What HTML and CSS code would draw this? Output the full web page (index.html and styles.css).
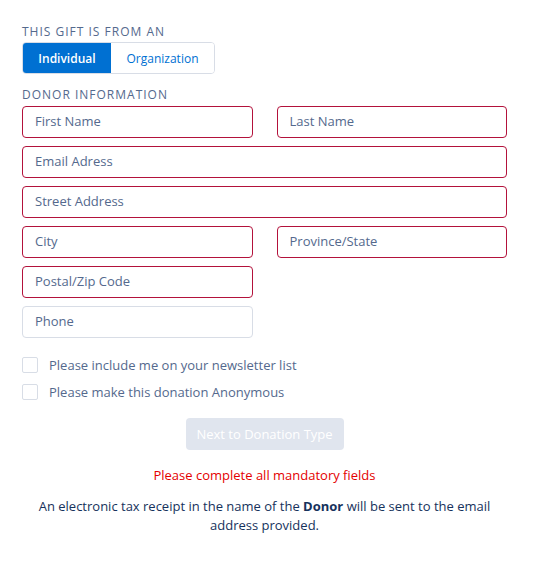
FILE: index.html
```html
<!DOCTYPE html>
<html>
<head>
<meta charset="utf-8">
<link rel="stylesheet" href="styles.css">
</head>
<body>
<div class="form">
  <div class="label">This gift is from an</div>
  <div class="toggle">
    <button class="seg active">Individual</button>
    <button class="seg">Organization</button>
  </div>
  <div class="label label-donor">Donor Information</div>
  <div class="fields">
    <div class="row two">
      <div class="input error">First Name</div>
      <div class="input error">Last Name</div>
    </div>
    <div class="input error">Email Adress</div>
    <div class="input error">Street Address</div>
    <div class="row two">
      <div class="input error">City</div>
      <div class="input error">Province/State</div>
    </div>
    <div class="row two">
      <div class="input error">Postal/Zip Code</div>
      <div></div>
    </div>
    <div class="row two">
      <div class="input">Phone</div>
      <div></div>
    </div>
  </div>
  <div class="checks">
    <label class="check"><span class="box"></span>Please include me on your newsletter list</label>
    <label class="check"><span class="box"></span>Please make this donation Anonymous</label>
  </div>
  <div class="actions">
    <button class="next">Next to Donation Type</button>
  </div>
  <div class="err-msg">Please complete all mandatory fields</div>
  <p class="note">An electronic tax receipt in the name of the <b>Donor</b> will be sent to the email address provided.</p>
</div>
</body>
</html>
```
FILE: styles.css
```css
* { box-sizing: border-box; }
body {
  margin: 0;
  background: #fff;
  font-family: "Open Sans", "Liberation Sans", sans-serif;
  color: #16325c;
}
.form {
  width: 485px;
  margin-left: 22px;
  padding-top: 24px;
}
.label {
  font-size: 12px;
  letter-spacing: 1px;
  text-transform: uppercase;
  color: #54698d;
  line-height: 16px;
}
.toggle {
  display: flex;
  width: 193px;
  margin-top: 2px;
  border: 1px solid #d8dde6;
  border-radius: 4px;
  overflow: hidden;
}
.seg {
  font-family: inherit;
  font-size: 12px;
  height: 30px;
  border: 0;
  background: #fff;
  color: #0070d2;
  padding: 0;
  flex: 1 1 auto;
}
.seg.active {
  background: #0070d2;
  color: #fff;
  font-weight: 600;
  flex: 0 0 88px;
}
.label-donor { margin-top: 13px; }
.fields {
  display: flex;
  flex-direction: column;
  gap: 8px;
  margin-top: 3px;
}
.row.two {
  display: grid;
  grid-template-columns: 1fr 1fr;
  gap: 24px;
}
.input {
  height: 32px;
  border: 1px solid #d8dde6;
  border-radius: 4px;
  padding: 0 12px 2px;
  display: flex;
  align-items: center;
  font-size: 13px;
  color: #54698d;
}
.input.error { border-color: #b3123b; }
.checks {
  margin-top: 19px;
  display: flex;
  flex-direction: column;
  gap: 11px;
}
.check {
  display: flex;
  align-items: center;
  font-size: 13px;
  color: #54698d;
  line-height: 16px;
}
.box {
  width: 16px;
  height: 16px;
  border: 1px solid #d8dde6;
  border-radius: 2px;
  margin-right: 11px;
  background: #fff;
}
.actions {
  display: flex;
  justify-content: center;
  margin-top: 18px;
}
.next {
  font-family: inherit;
  width: 158px;
  height: 32px;
  border: 0;
  border-radius: 4px;
  background: #e0e5ee;
  color: #fff;
  font-size: 13px;
}
.err-msg {
  text-align: center;
  color: #e40000;
  font-size: 13px;
  margin-top: 16px;
  line-height: 18px;
}
.note {
  text-align: center;
  font-size: 13px;
  line-height: 19px;
  margin: 13px 0 0;
  padding: 0 14px;
  color: #16325c;
}
.note b { font-weight: 700; }
```
